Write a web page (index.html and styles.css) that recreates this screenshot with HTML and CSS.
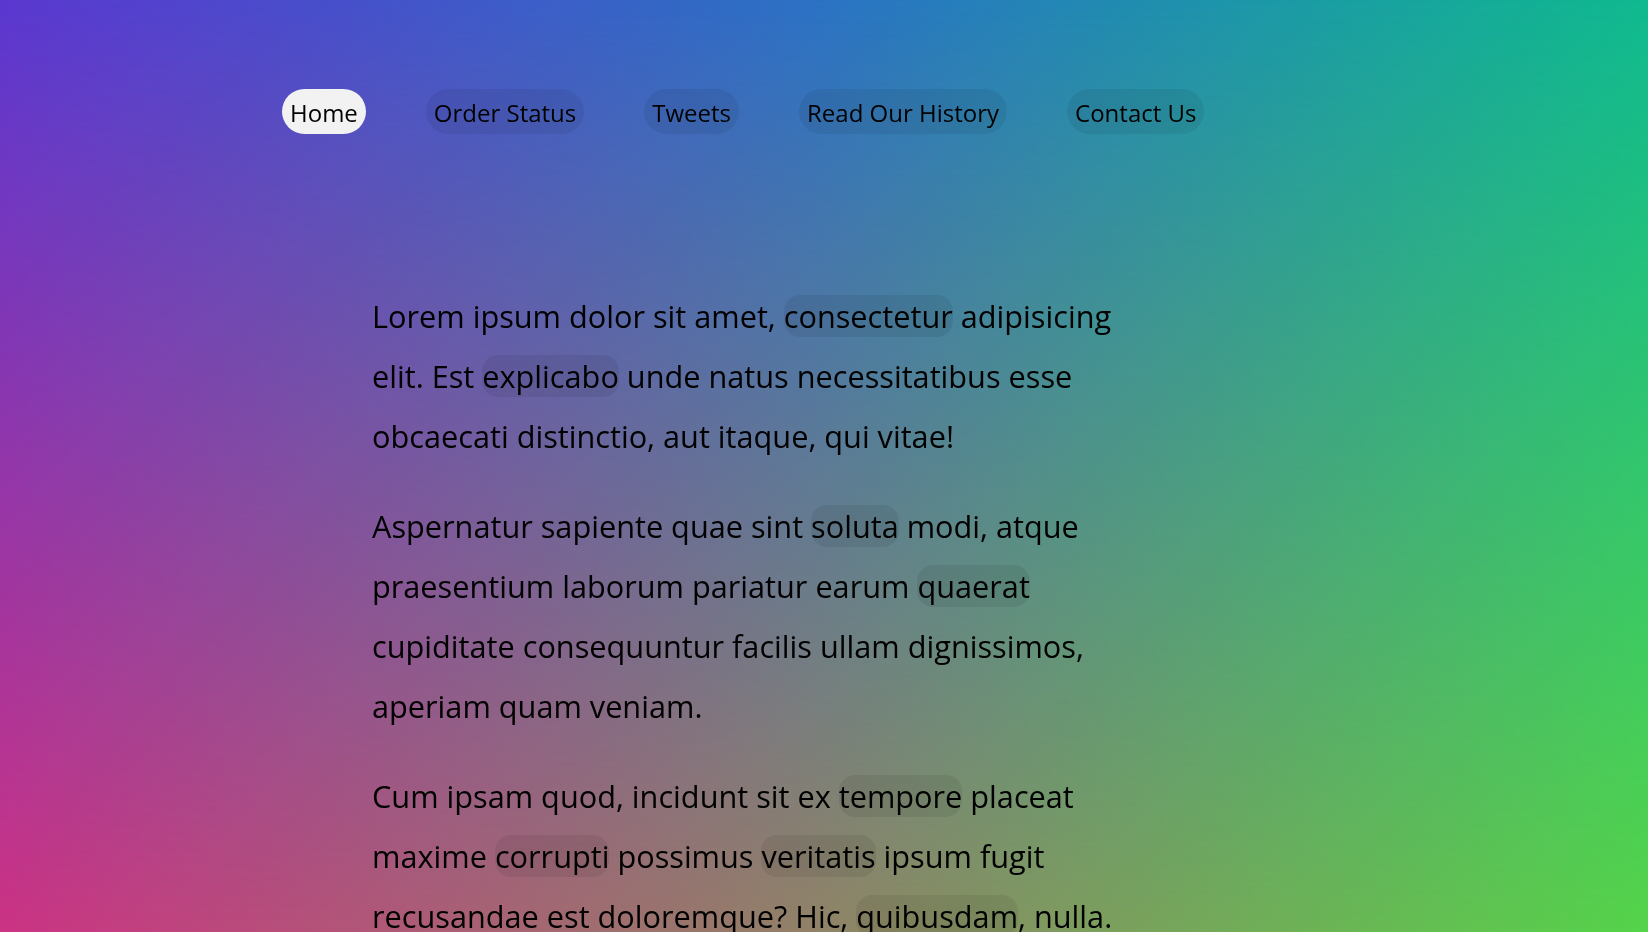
FILE: index.html
```html
<!DOCTYPE html>
<html lang="en">
<head>
<meta charset="utf-8">
<title>Home</title>
<link rel="stylesheet" href="styles.css">
</head>
<body>
<header class="site-header">
  <nav class="site-nav">
    <ul class="nav-list">
      <li><a class="nav-link is-active" href="#">Home</a></li>
      <li><a class="nav-link" href="#">Order Status</a></li>
      <li><a class="nav-link" href="#">Tweets</a></li>
      <li><a class="nav-link" href="#">Read Our History</a></li>
      <li><a class="nav-link" href="#">Contact Us</a></li>
    </ul>
  </nav>
</header>
<main class="content">
  <p class="copy">Lorem ipsum dolor sit amet, <span class="hl">consectetur</span> adipisicing elit. Est <span class="hl">explicabo</span> unde natus necessitatibus esse obcaecati distinctio, aut itaque, qui vitae!</p>
  <p class="copy">Aspernatur sapiente quae sint <span class="hl">soluta</span> modi, atque praesentium laborum pariatur earum <span class="hl">quaerat</span> cupiditate consequuntur facilis ullam dignissimos, aperiam quam veniam.</p>
  <p class="copy">Cum ipsam quod, incidunt sit ex <span class="hl">tempore</span> placeat maxime <span class="hl">corrupti</span> possimus <span class="hl">veritatis</span> ipsum fugit recusandae est doloremque? Hic, <span class="hl">quibusdam</span>, nulla.</p>
</main>
</body>
</html>
```
FILE: styles.css
```css
html, body {
  margin: 0;
  padding: 0;
}

html {
  overflow: hidden;
}

body {
  min-height: 100vh;
  font-family: "Open Sans", "Noto Sans", sans-serif;
  color: #000;
}

body::before,
body::after {
  content: "";
  position: fixed;
  inset: 0;
  pointer-events: none;
}

body::before {
  z-index: -2;
  background: linear-gradient(to right, #cc3384, #55d44a);
}

body::after {
  z-index: -1;
  background: linear-gradient(to right, #5a38d0, #2a72c4 50%, #0fb98f);
  -webkit-mask-image: linear-gradient(to bottom, #000, transparent);
  mask-image: linear-gradient(to bottom, #000, transparent);
}

.site-nav {
  padding: 89px 0 0 282px;
}

.nav-list {
  display: flex;
  gap: 60px;
  margin: 0;
  padding: 0;
  list-style: none;
}

.nav-link {
  display: block;
  padding: 7px 8px 5px;
  font-size: 24px;
  line-height: 33px;
  color: #000;
  text-decoration: none;
  border-radius: 999px;
  background: rgba(0, 0, 0, 0.065);
}

.nav-link.is-active {
  background: #f2f2f2;
}

.content {
  width: 780px;
  margin-left: 372px;
  padding-top: 122px;
}

.copy {
  margin: 30px 0;
  font-size: 30.7px;
  line-height: 60px;
}

.hl {
  background: rgba(0, 0, 0, 0.07);
  border-radius: 16px;
}
```
